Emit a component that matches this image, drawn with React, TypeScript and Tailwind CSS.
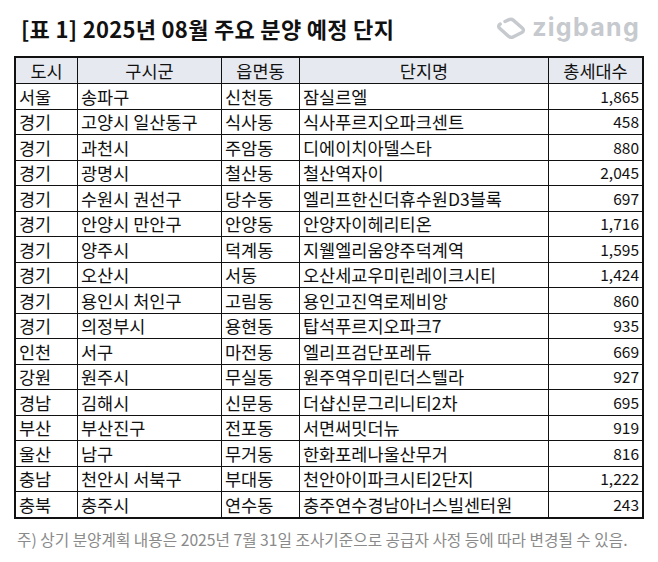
import React from "react";

const rows: [string, string, string, string, string][] = [
  ["서울", "송파구", "신천동", "잠실르엘", "1,865"],
  ["경기", "고양시 일산동구", "식사동", "식사푸르지오파크센트", "458"],
  ["경기", "과천시", "주암동", "디에이치아델스타", "880"],
  ["경기", "광명시", "철산동", "철산역자이", "2,045"],
  ["경기", "수원시 권선구", "당수동", "엘리프한신더휴수원D3블록", "697"],
  ["경기", "안양시 만안구", "안양동", "안양자이헤리티온", "1,716"],
  ["경기", "양주시", "덕계동", "지웰엘리움양주덕계역", "1,595"],
  ["경기", "오산시", "서동", "오산세교우미린레이크시티", "1,424"],
  ["경기", "용인시 처인구", "고림동", "용인고진역로제비앙", "860"],
  ["경기", "의정부시", "용현동", "탑석푸르지오파크7", "935"],
  ["인천", "서구", "마전동", "엘리프검단포레듀", "669"],
  ["강원", "원주시", "무실동", "원주역우미린더스텔라", "927"],
  ["경남", "김해시", "신문동", "더샵신문그리니티2차", "695"],
  ["부산", "부산진구", "전포동", "서면써밋더뉴", "919"],
  ["울산", "남구", "무거동", "한화포레나울산무거", "816"],
  ["충남", "천안시 서북구", "부대동", "천안아이파크시티2단지", "1,222"],
  ["충북", "충주시", "연수동", "충주연수경남아너스빌센터원", "243"],
];

const font = { fontFamily: '"Noto Sans CJK KR", "Noto Sans", sans-serif' };
const grid = "grid grid-cols-[61px_144px_78px_249px_94px]";

export default function App() {
  return (
    <div className="w-[658px] h-[562px] bg-white relative overflow-hidden" style={font}>
      <div className="flex items-center justify-between pl-[21px] pr-[18px] pt-[8px] h-[56px] pb-[9px]">
        <div className="text-[22px] font-bold text-[#111] tracking-[0.3px] leading-none">
          [표 1] 2025년 08월 주요 분양 예정 단지
        </div>
        <div className="flex items-center gap-[6px] text-[#c6c9cd]">
          <svg width="30" height="22" viewBox="0 0 30 22" fill="none">
            <path
              d="M9 4.5 L13 2.6 C14.5 1.9 16 2.1 17.2 3.1 L26.5 11.2 C28 12.5 27.6 14.6 25.8 15.6 L17.5 19.8 C15.8 20.7 13.6 20.4 12.2 19.1 L3.6 11.3 C2.2 10 2.5 7.9 4.2 7"
              stroke="currentColor"
              strokeWidth="3.4"
              strokeLinecap="round"
              strokeLinejoin="round"
            />
          </svg>
          <span
            className="text-[25px] font-bold leading-none tracking-[1.3px]"
            style={{ fontFamily: 'Inter, "Liberation Sans", sans-serif' }}
          >
            zigbang
          </span>
        </div>
      </div>
      <div className="ml-[14px] w-[630px] border-2 border-[#111] text-[17.5px] text-[#111] leading-none">
        <div className={`${grid} h-[25px] bg-[#e6e9ef]`}>
          {["도시", "구시군", "읍면동", "단지명", "총세대수"].map((h, i) => (
            <div
              key={h}
              className={`flex items-center justify-center ${i > 0 ? "border-l border-[#111]" : ""}`}
            >
              {h}
            </div>
          ))}
        </div>
        {rows.map((r, ri) => (
          <div key={ri} className={`${grid} h-[25.5px] border-t border-[#111]`}>
            {r.map((c, i) => (
              <div
                key={i}
                className={`flex items-center whitespace-nowrap ${
                  i > 0 ? "border-l border-[#111]" : ""
                } ${i === 4 ? "justify-end pr-[3px] text-[15.5px]" : "pl-[3px]"}`}
              >
                {c}
              </div>
            ))}
          </div>
        ))}
      </div>
      <div className="pl-[17px] pt-[13px] text-[15.7px] text-[#8a8a8a] leading-none">
        주) 상기 분양계획 내용은 2025년 7월 31일 조사기준으로 공급자 사정 등에 따라 변경될 수 있음.
      </div>
    </div>
  );
}
